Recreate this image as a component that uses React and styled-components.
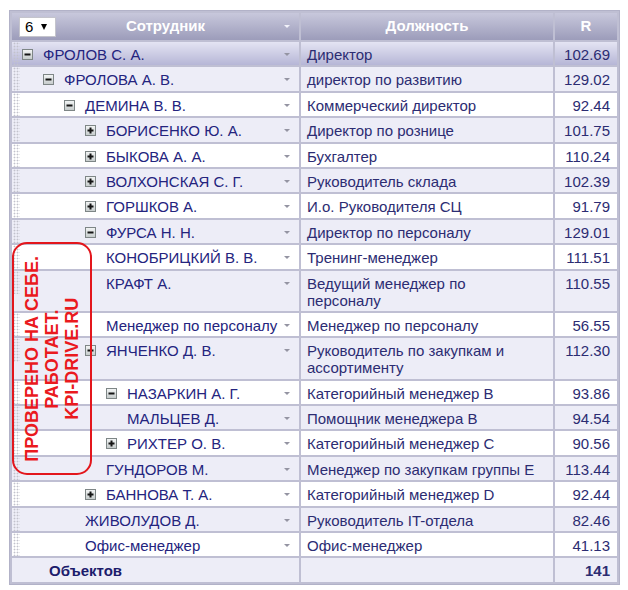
import React from 'react';
import styled, { createGlobalStyle } from 'styled-components';

const Global = createGlobalStyle`
  html, body { margin: 0; padding: 0; background: #fff; }
  body { font-family: "Liberation Sans", Arial, sans-serif; }
`;

const Page = styled.div`
  position: relative;
  width: 628px;
  height: 590px;
  box-sizing: border-box;
  padding: 10px 0 0 9px;
  overflow: hidden;
`;

const Grid = styled.table`
  width: 611px;
  table-layout: fixed;
  border-collapse: separate;
  border-spacing: 2px;
  background: #bfbfd3;
  border: 1px solid #b2b2c8;
  font-size: 15px;
`;

const HeadCell = styled.th`
  height: 27px;
  padding: 0;
  background: linear-gradient(#c8c8dc, #9c9cba);
  color: #fff;
  font-weight: bold;
  font-size: 15px;
  vertical-align: middle;
`;

const HeadInner = styled.div`
  display: flex;
  align-items: center;
  justify-content: ${p => (p.$center ? 'center' : 'flex-start')};
  height: 27px;
`;

const HeadTitle = styled.span`
  flex: 1;
  text-align: center;
  margin-top: -3px;
`;

const PlainTitle = styled.span`
  margin-top: -3px;
`;

const Select = styled.div`
  margin-left: 7px;
  width: 37px;
  height: 20px;
  box-sizing: border-box;
  background: #fff;
  border: 1px solid #c4c4cc;
  display: flex;
  align-items: center;
  padding-left: 5px;
  gap: 8px;
  color: #000;
  font-weight: normal;
  font-size: 15px;
`;

const SelectArrow = styled.span`
  width: 0;
  height: 0;
  border-left: 3.5px solid transparent;
  border-right: 3.5px solid transparent;
  border-top: 6px solid #000;
`;

const Cell = styled.td`
  padding: 4px 7px 2.4px 6px;
  line-height: 17px;
  vertical-align: top;
  white-space: pre-line;
  color: #2c2c72;
  text-align: ${p => (p.$num ? 'right' : 'left')};
  font-weight: ${p => (p.$bold ? 'bold' : 'normal')};
  background: ${p =>
    p.$sel
      ? 'linear-gradient(#e4e4f3, #b6b6d6)'
      : p.$alt
      ? '#ededf7'
      : '#ffffff'};
`;

const TreeCell = styled(Cell)`
  padding: 4px 0 2.4px 0;
  color: #24247e;
`;

const Tree = styled.div`
  display: flex;
  align-items: flex-start;
`;

const Grip = styled.span`
  flex: none;
  width: 7px;
  margin: -4px 2px -2.4px 1px;
  align-self: stretch;
  background-image: radial-gradient(circle, #c2c2cc 0.8px, transparent 1.1px);
  background-size: 3px 3px;
`;

const Indent = styled.span`
  flex: none;
  width: ${p => p.$level * 21}px;
`;

const ToggleSlot = styled.span`
  flex: none;
  width: 21px;
  height: 17px;
  display: flex;
  align-items: center;
`;

const Label = styled.span`
  flex: 1;
  min-width: 0;
  white-space: nowrap;
`;

const CaretSlot = styled.span`
  flex: none;
  width: 24px;
  height: 17px;
  display: flex;
  align-items: center;
  justify-content: center;
`;

const Caret = styled.span`
  width: 0;
  height: 0;
  border-left: 3px solid transparent;
  border-right: 3px solid transparent;
  border-top: 3px solid ${p => (p.$light ? '#f2f2fa' : '#9494a2')};
`;

const FooterLabel = styled.span`
  padding-left: 31px;
  color: #1c1c6c;
  font-weight: bold;
`;

const Stamp = styled.div`
  position: absolute;
  left: 12px;
  top: 242px;
  width: 80px;
  height: 233px;
  box-sizing: border-box;
  border: 2.5px solid #e3161c;
  border-radius: 15px;
  display: flex;
  align-items: center;
  justify-content: center;
`;

const StampText = styled.div`
  writing-mode: vertical-rl;
  transform: rotate(180deg);
  text-align: center;
  color: #ea1a1e;
  font-family: "Liberation Sans", Arial, sans-serif;
  font-weight: bold;
  font-size: 18px;
  line-height: 20px;
  white-space: nowrap;
`;

const Toggle = ({ open }) => (
  <svg width="11" height="11" viewBox="0 0 11 11">
    <defs>
      <linearGradient id="tgl" x1="0" y1="0" x2="0" y2="1">
        <stop offset="0" stopColor="#f4f6f6" />
        <stop offset="1" stopColor="#c4caca" />
      </linearGradient>
    </defs>
    <rect x="0.5" y="0.5" width="10" height="10" fill="url(#tgl)" stroke="#7e8686" />
    <rect x="2.5" y="4.5" width="6" height="2" fill="#151515" />
    {!open && <rect x="4.5" y="2.5" width="2" height="6" fill="#151515" />}
  </svg>
);

const rows = [
  { name: 'ФРОЛОВ С. А.', lvl: 0, t: '-', pos: 'Директор', r: '102.69', sel: true },
  { name: 'ФРОЛОВА А. В.', lvl: 1, t: '-', pos: 'директор по развитию', r: '129.02' },
  { name: 'ДЕМИНА В. В.', lvl: 2, t: '-', pos: 'Коммерческий директор', r: '92.44' },
  { name: 'БОРИСЕНКО Ю. А.', lvl: 3, t: '+', pos: 'Директор по рознице', r: '101.75' },
  { name: 'БЫКОВА А. А.', lvl: 3, t: '+', pos: 'Бухгалтер', r: '110.24' },
  { name: 'ВОЛХОНСКАЯ С. Г.', lvl: 3, t: '+', pos: 'Руководитель склада', r: '102.39' },
  { name: 'ГОРШКОВ А.', lvl: 3, t: '+', pos: 'И.о. Руководителя СЦ', r: '91.79' },
  { name: 'ФУРСА Н. Н.', lvl: 3, t: '-', pos: 'Директор по персоналу', r: '129.01' },
  { name: 'КОНОБРИЦКИЙ В. В.', lvl: 4, pos: 'Тренинг-менеджер', r: '111.51' },
  { name: 'КРАФТ А.', lvl: 4, pos: 'Ведущий менеджер по\nперсоналу', r: '110.55' },
  { name: 'Менеджер по персоналу', lvl: 4, pos: 'Менеджер по персоналу', r: '56.55' },
  { name: 'ЯНЧЕНКО Д. В.', lvl: 3, t: '-', pos: 'Руководитель по закупкам и\nассортименту', r: '112.30' },
  { name: 'НАЗАРКИН А. Г.', lvl: 4, t: '-', pos: 'Категорийный менеджер B', r: '93.86' },
  { name: 'МАЛЬЦЕВ Д.', lvl: 5, pos: 'Помощник менеджера B', r: '94.54' },
  { name: 'РИХТЕР О. В.', lvl: 4, t: '+', pos: 'Категорийный менеджер C', r: '90.56' },
  { name: 'ГУНДОРОВ М.', lvl: 4, pos: 'Менеджер по закупкам группы E', r: '113.44' },
  { name: 'БАННОВА Т. А.', lvl: 3, t: '+', pos: 'Категорийный менеджер D', r: '92.44' },
  { name: 'ЖИВОЛУДОВ Д.', lvl: 3, pos: 'Руководитель IT-отдела', r: '82.46' },
  { name: 'Офис-менеджер', lvl: 3, pos: 'Офис-менеджер', r: '41.13' },
];

export default function App() {
  return (
    <Page>
      <Global />
      <Grid>
        <colgroup>
          <col style={{ width: 287 }} />
          <col style={{ width: 252 }} />
          <col style={{ width: 62 }} />
        </colgroup>
        <thead>
          <tr>
            <HeadCell>
              <HeadInner>
                <Select>
                  6 <SelectArrow />
                </Select>
                <HeadTitle>Сотрудник</HeadTitle>
                <CaretSlot>
                  <Caret $light />
                </CaretSlot>
              </HeadInner>
            </HeadCell>
            <HeadCell>
              <HeadInner $center>
                <PlainTitle>Должность</PlainTitle>
              </HeadInner>
            </HeadCell>
            <HeadCell>
              <HeadInner $center>
                <PlainTitle>R</PlainTitle>
              </HeadInner>
            </HeadCell>
          </tr>
        </thead>
        <tbody>
          {rows.map((row, i) => {
            const alt = i % 2 === 1;
            return (
              <tr key={i}>
                <TreeCell $sel={row.sel} $alt={alt}>
                  <Tree>
                    <Grip />
                    <Indent $level={row.lvl} />
                    {row.t && (
                      <ToggleSlot>
                        <Toggle open={row.t === '-'} />
                      </ToggleSlot>
                    )}
                    <Label>{row.name}</Label>
                    <CaretSlot>
                      <Caret />
                    </CaretSlot>
                  </Tree>
                </TreeCell>
                <Cell $sel={row.sel} $alt={alt}>{row.pos}</Cell>
                <Cell $num $sel={row.sel} $alt={alt}>{row.r}</Cell>
              </tr>
            );
          })}
          <tr>
            <Cell $alt>
              <FooterLabel>Объектов</FooterLabel>
            </Cell>
            <Cell $alt />
            <Cell $alt $num $bold>141</Cell>
          </tr>
        </tbody>
      </Grid>
      <Stamp>
        <StampText>
          ПРОВЕРЕНО НА СЕБЕ.
          <br />
          РАБОТАЕТ.
          <br />
          KPI-DRIVE.RU
        </StampText>
      </Stamp>
    </Page>
  );
}
